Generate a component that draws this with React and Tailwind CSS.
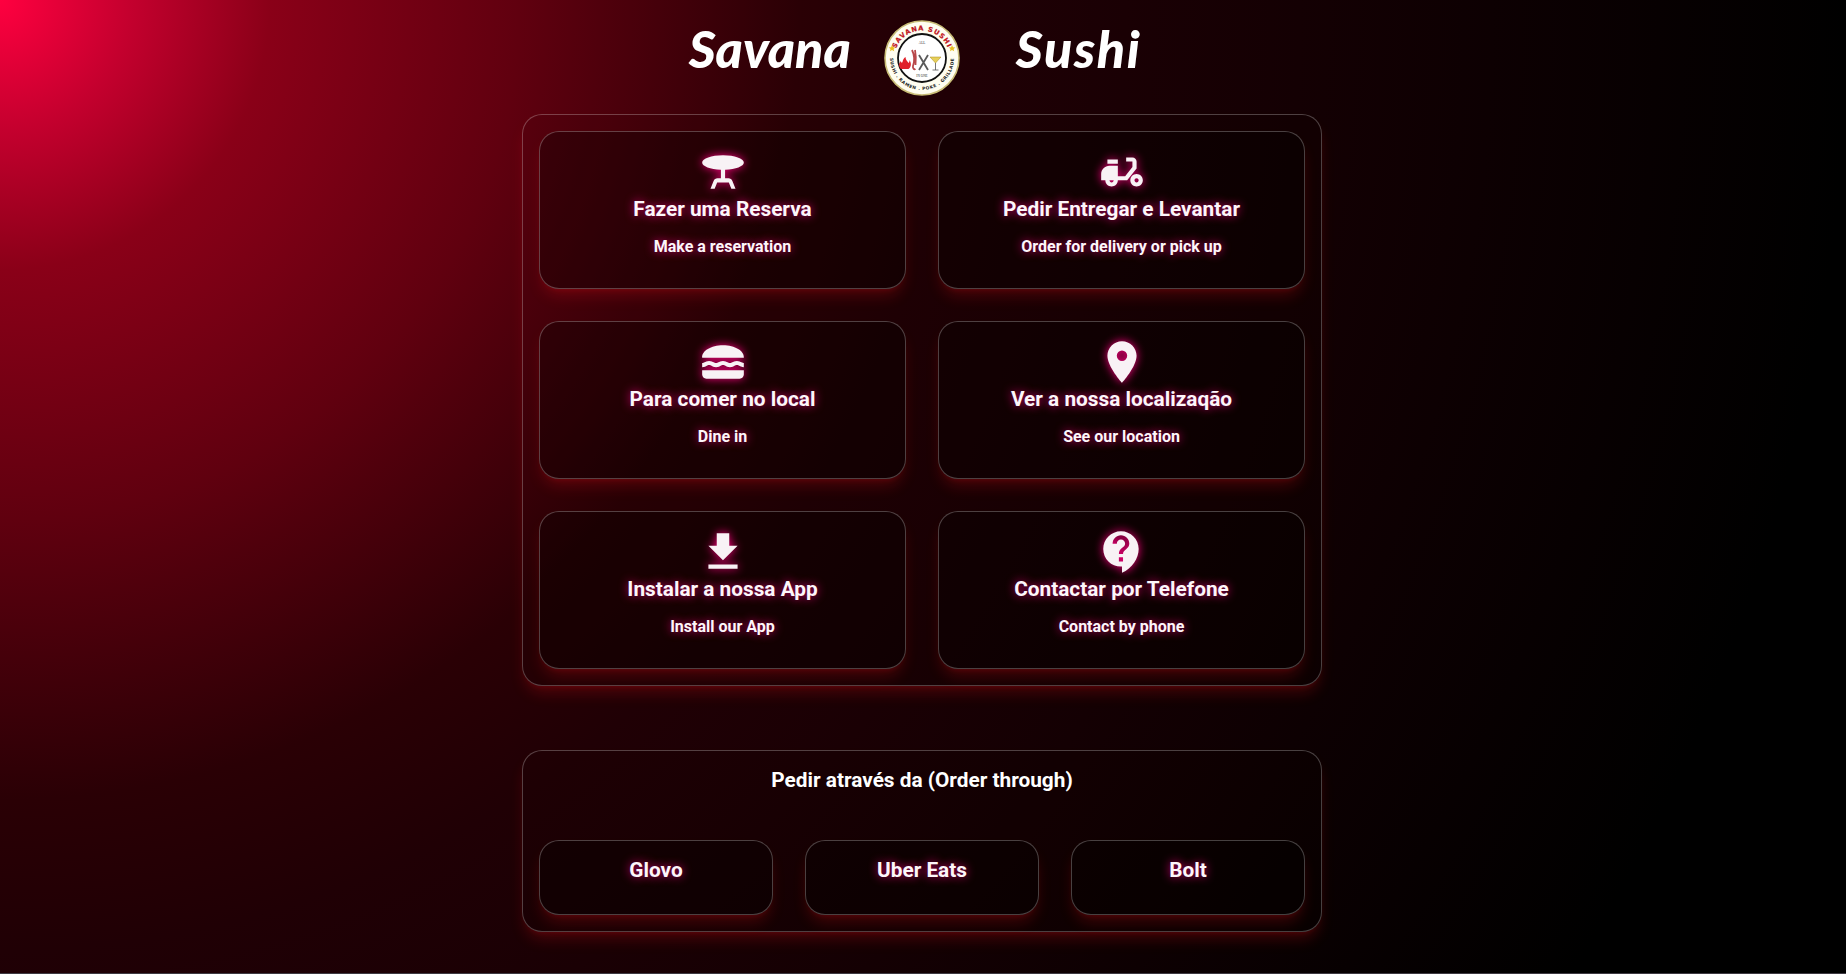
import React from "react";
import { MdTableBar, MdMoped, MdLunchDining, MdLocationOn, MdDownload, MdContactSupport } from "react-icons/md";

function Logo() {
  return (
    <svg viewBox="0 0 76 76" className="w-[76px] h-[76px] shrink-0" aria-label="Savana Sushi logo">
      <defs>
        <path id="arcTop" d="M 10.500 38 A 27.500 27.500 0 0 1 65.500 38" />
        <path id="arcBottom" d="M 9 24.500 A 32 32 0 1 0 67 24.500" />
      </defs>
      <circle cx="38" cy="38" r="37" fill="#fffdf0" stroke="#c9bd78" strokeWidth="1.6" />
      <circle cx="38" cy="38" r="24" fill="#fff" stroke="#111" strokeWidth="1.8" />
      <text fontSize="6.600" fontWeight="700" fill="#d3141e" stroke="#8a0c10" strokeWidth="0.2" letterSpacing="1" fontFamily="DejaVu Sans, sans-serif" textAnchor="middle">
        <textPath href="#arcTop" startOffset="50%">SAVANA SUSHI</textPath>
      </text>
      <text fontSize="4.400" fontWeight="700" fill="#222" letterSpacing="0.5" fontFamily="DejaVu Sans, sans-serif" textAnchor="middle">
        <textPath href="#arcBottom" startOffset="50%">SUSHI . RAMEN . POKE . GRILLADE</textPath>
      </text>
      <path d="M8 25l1 2.200 2.400.2-1.800 1.600.6 2.300-2.200-1.200-2 1.200.500-2.300-1.800-1.600 2.400-.2z" fill="#e8c020" />
      <path d="M68 25l1 2.200 2.400.2-1.800 1.600.6 2.300-2.200-1.200-2 1.200.500-2.300-1.800-1.600 2.400-.2z" fill="#e8c020" />
      <text x="38" y="24" fontSize="3.400" textAnchor="middle" fill="#333" fontFamily="Liberation Serif, serif">ALL</text>
      <text x="38" y="57" fontSize="3.400" textAnchor="middle" fill="#333" fontFamily="Liberation Serif, serif">IN ONE</text>
      <path d="M17 49c-3-3-2-6 0-8 0 2 1 2 1.500 1 .5-2 1-4 3-5 0 3 2 4 3 6 1-1 1-2 1-3 2 3 2 7-1 9z" fill="#e0202a" />
      <path d="M28 30c2 4 3 10 1 16c-.5 2 1 4 2.500 3M31 30c1 5 1 10 .5 15" stroke="#b8484a" strokeWidth="1.800" fill="none" />
      <path d="M35 35l9 15M44 35l-9 15" stroke="#5a5a5a" strokeWidth="1.800" fill="none" />
      <path d="M46 37h11l-5.500 6z" stroke="#a88a18" strokeWidth="0.500" fill="#e6cf5a" />
      <path d="M51.500 43v7M48.500 50h6" stroke="#555" strokeWidth="0.800" fill="none" />
    </svg>
  );
}

const glowText = "[text-shadow:0_0_10px_#d80070]";
const shadow = "shadow-[0_10px_15px_-3px_rgba(255,20,30,0.2),0_4px_6px_-4px_rgba(255,20,30,0.2)]";
const card = `rounded-[20px] border border-white/25 bg-black/30 ${shadow}`;
const panel = `rounded-[20px] border border-white/25 bg-black/5 ${shadow}`;
const titleFont = "font-['Lato',sans-serif] font-black italic text-[52px] leading-none text-white mb-[20px]";

function ServiceCard({ Icon, title, sub }) {
  return (
    <div className={`${card} h-[158px] flex flex-col items-center pt-[15px] text-[#fdf6fa]`}>
      <Icon className="w-[50px] h-[50px] text-[#f8f2f5] drop-shadow-[0_0_5px_#ff0080]" />
      <div className={`text-[20.8px] leading-[28px] font-bold -mt-[2px] ${glowText}`}>{title}</div>
      <div className={`text-[16px] leading-[24px] font-bold mt-[12px] ${glowText}`}>{sub}</div>
    </div>
  );
}

function OrderCard({ label }) {
  return (
    <div className={`${card} h-[75px] pt-[15px] text-center text-[20.8px] leading-[28px] font-bold text-[#fdf6fa] ${glowText}`}>
      {label}
    </div>
  );
}

const rows = [
  [MdTableBar, "Fazer uma Reserva", "Make a reservation"],
  [MdMoped, "Pedir Entregar e Levantar", "Order for delivery or pick up"],
  [MdLunchDining, "Para comer no local", "Dine in"],
  [MdLocationOn, "Ver a nossa localizaqão", "See our location"],
  [MdDownload, "Instalar a nossa App", "Install our App"],
  [MdContactSupport, "Contactar por Telefone", "Contact by phone"],
];

export default function App() {
  return (
    <div className="h-[974px] bg-[#3e3a42]">
      <div className="h-[973px] pr-[2px] overflow-hidden text-white font-['Roboto',sans-serif] bg-[radial-gradient(circle_at_top_left,#ff0040_0px,#c4002e_130px,#8a0018_270px,#60000f_520px,#50000c_600px,#2a0005_800px,#200005_950px,#140003_1300px,#000_1850px)]">
        <div className="w-[800px] mx-auto">
          <header className="h-[114px] flex items-center justify-center pr-[14px] pt-[1px]">
            <span className={titleFont}>Savana</span>
            <span className="ml-[33px] mr-[56px]"><Logo /></span>
            <span className={`${titleFont} tracking-[1.6px]`}>Sushi</span>
          </header>

          <section className={`${panel} p-4 h-[572px] grid grid-cols-2 gap-x-8 gap-y-[32px] content-start`}>
            {rows.map(([Icon, title, sub]) => (
              <ServiceCard key={title} Icon={Icon} title={title} sub={sub} />
            ))}
          </section>

          <section className={`${panel} mt-[64px] h-[182px] px-4 pt-[15px]`}>
            <h2 className="text-center text-[20.8px] leading-[28px] font-bold text-white">Pedir através da (Order through)</h2>
            <div className="grid grid-cols-3 gap-x-8 mt-[46px]">
              <OrderCard label="Glovo" />
              <OrderCard label="Uber Eats" />
              <OrderCard label="Bolt" />
            </div>
          </section>
        </div>
      </div>
    </div>
  );
}
